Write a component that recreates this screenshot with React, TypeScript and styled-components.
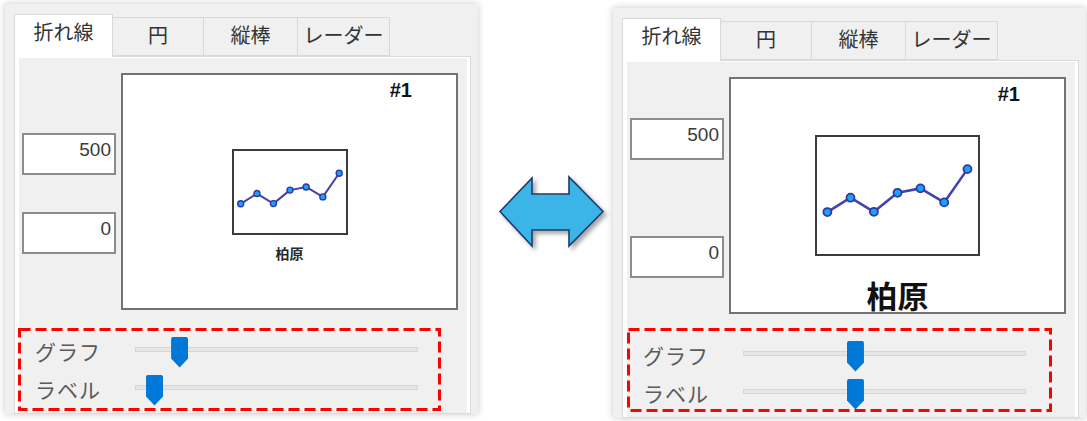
import React from 'react';
import styled, { createGlobalStyle } from 'styled-components';

const GlobalStyle = createGlobalStyle`
  html, body { margin: 0; padding: 0; background: #ffffff; }
  body { font-family: "Noto Sans CJK JP", "Noto Sans", sans-serif; }
`;

const Page = styled.div`
  display: flex;
  align-items: flex-start;
  width: 1087px;
  height: 421px;
  overflow: hidden;
`;

const Window = styled.div<{ $top: number; $left: number }>`
  margin-top: ${(p) => p.$top}px;
  margin-left: ${(p) => p.$left}px;
  width: 473px;
  height: 410px;
  flex: none;
  box-sizing: border-box;
  padding: 10px 0 0 9px;
  background: #f0f0f0;
  box-shadow: 0 0 7px rgba(0, 0, 0, 0.22);
  overflow: hidden;
  display: flex;
  flex-direction: column;
`;

const TabStrip = styled.div`
  display: flex;
  align-items: flex-start;
  height: 43px;
  margin-bottom: -1px;
  position: relative;
  z-index: 1;
`;

const Tab = styled.div<{ $w: number; $active?: boolean }>`
  width: ${(p) => p.$w}px;
  height: ${(p) => (p.$active ? 43 : 39)}px;
  margin-top: ${(p) => (p.$active ? 0 : 3)}px;
  margin-left: -1px;
  &:first-child { margin-left: 0; }
  box-sizing: border-box;
  border: 1px solid #d9d9d9;
  border-bottom: ${(p) => (p.$active ? 'none' : '1px solid #d9d9d9')};
  background: ${(p) => (p.$active ? '#ffffff' : '#f0f0f0')};
  display: flex;
  justify-content: center;
  align-items: flex-start;
  padding-top: 5px;
  font-size: 20px;
  line-height: 24px;
  color: #333333;
  position: relative;
  z-index: ${(p) => (p.$active ? 2 : 1)};
`;

const TabPanel = styled.div`
  width: 457px;
  flex: 1;
  box-sizing: border-box;
  border: 1px solid #dadada;
  background: #ffffff;
  padding: 1px 3px 0 4px;
  display: flex;
`;

const Content = styled.div`
  flex: 1;
  background: #f0f0f0;
  padding-top: 15px;
  display: flex;
  flex-direction: column;
`;

const TopArea = styled.div`
  display: flex;
  align-items: flex-start;
`;

const InputColumn = styled.div<{ $first: number; $gap: number }>`
  width: 102px;
  box-sizing: border-box;
  padding: ${(p) => p.$first}px 0 0 3px;
  display: flex;
  flex-direction: column;
  gap: ${(p) => p.$gap}px;
`;

const TextBox = styled.div`
  width: 94px;
  height: 42px;
  box-sizing: border-box;
  border: 2px solid #8c8c8c;
  background: #ffffff;
  padding: 4px 3px 0 0;
  text-align: right;
  font-family: "Liberation Sans", Arial, sans-serif;
  font-size: 19px;
  line-height: 22px;
  color: #3a3a3a;
`;

const ChartFrame = styled.div`
  width: 337px;
  height: 237px;
  box-sizing: border-box;
  border: 2px solid #727272;
  background: #ffffff;
  padding-top: 3px;
  display: flex;
  flex-direction: column;
  align-items: center;
`;

const Badge = styled.div`
  align-self: flex-end;
  margin-right: 44px;
  font-family: "Liberation Sans", Arial, sans-serif;
  font-weight: 700;
  font-size: 20px;
  line-height: 24px;
  color: #111111;
`;

const MiniChartBox = styled.div<{ $w: number; $h: number; $top: number }>`
  width: ${(p) => p.$w}px;
  height: ${(p) => p.$h}px;
  margin-top: ${(p) => p.$top}px;
  box-sizing: border-box;
  border: 2px solid #3c3c3c;
  background: #ffffff;
  svg { display: block; }
`;

const Caption = styled.div<{ $size: number; $top: number }>`
  margin-top: ${(p) => p.$top}px;
  font-size: ${(p) => p.$size}px;
  line-height: 1.2;
  font-weight: 700;
  color: ${(p) => (p.$size > 20 ? '#111111' : '#2a2a2a')};
`;

const SliderGroup = styled.div`
  position: relative;
  margin-top: 20px;
  padding-left: 16px;
  display: flex;
  flex-direction: column;
`;

const SliderRow = styled.div`
  display: grid;
  grid-template-columns: 100px 283px;
  align-items: center;
  height: 38px;
`;

const SliderLabel = styled.div`
  font-size: 21px;
  letter-spacing: 1px;
  line-height: 24px;
  padding-top: 3px;
  color: #5b5b5b;
`;

const Track = styled.div`
  position: relative;
  height: 5px;
  box-sizing: border-box;
  border: 1px solid #d6d6d6;
  background: #e6e6e6;
`;

const Thumb = styled.div`
  position: absolute;
  top: -11px;
  width: 17px;
  height: 31px;
  background: #0078d7;
  border-radius: 2px 2px 0 0;
  clip-path: polygon(0 0, 100% 0, 100% 71%, 50% 100%, 0 71%);
`;

const DashedOverlay = styled.svg<{ $x: number; $y: number }>`
  position: absolute;
  left: ${(p) => p.$x}px;
  top: ${(p) => p.$y}px;
  pointer-events: none;
  overflow: visible;
`;

const ArrowSlot = styled.div`
  width: 135px;
  flex: none;
  margin-top: 175px;
  padding-left: 20px;
  box-sizing: border-box;
  svg { display: block; }
`;

const NX = [0.075, 0.215, 0.357, 0.5, 0.639, 0.783, 0.924];
const NY = [0.637, 0.518, 0.635, 0.478, 0.441, 0.557, 0.282];

function MiniChart({ w, h, top, r, sw }: { w: number; h: number; top: number; r: number; sw: number }) {
  const iw = w - 4;
  const ih = h - 4;
  const pts = NX.map((x, i) => [x * w - 2, NY[i] * h - 2]);
  return (
    <MiniChartBox $w={w} $h={h} $top={top}>
      <svg width={iw} height={ih} viewBox={`0 0 ${iw} ${ih}`}>
        <polyline
          points={pts.map((p) => p.join(',')).join(' ')}
          fill="none"
          stroke="#4343ad"
          strokeWidth={sw}
          strokeLinejoin="round"
        />
        {pts.map((p, i) => (
          <circle key={i} cx={p[0]} cy={p[1]} r={r} fill="#18a4f2" stroke="#3436a6" strokeWidth={sw * 0.7} />
        ))}
      </svg>
    </MiniChartBox>
  );
}

function Slider({ label, value }: { label: string; value: number }) {
  return (
    <SliderRow>
      <SliderLabel>{label}</SliderLabel>
      <Track>
        <Thumb style={{ left: `calc(${value} * (100% - 17px))` }} />
      </Track>
    </SliderRow>
  );
}

type PanelProps = {
  top: number;
  left: number;
  boxFirst: number;
  boxGap: number;
  chart: { w: number; h: number; top: number; r: number; sw: number };
  caption: { size: number; top: number };
  graph: number;
  labelV: number;
  dash: { x: number; y: number; w: number; h: number };
};

function ChartWindow(p: PanelProps) {
  return (
    <Window $top={p.top} $left={p.left}>
      <TabStrip>
        <Tab $w={99} $active>折れ線</Tab>
        <Tab $w={92}>円</Tab>
        <Tab $w={95}>縦棒</Tab>
        <Tab $w={93}>レーダー</Tab>
      </TabStrip>
      <TabPanel>
        <Content>
          <TopArea>
            <InputColumn $first={p.boxFirst - 15} $gap={p.boxGap}>
              <TextBox>500</TextBox>
              <TextBox>0</TextBox>
            </InputColumn>
            <ChartFrame>
              <Badge>#1</Badge>
              <MiniChart {...p.chart} />
              <Caption $size={p.caption.size} $top={p.caption.top}>柏原</Caption>
            </ChartFrame>
          </TopArea>
          <SliderGroup>
            <Slider label="グラフ" value={p.graph} />
            <Slider label="ラベル" value={p.labelV} />
            <DashedOverlay $x={p.dash.x} $y={p.dash.y} width={p.dash.w} height={p.dash.h}>
              <rect
                x={1.5}
                y={1.5}
                width={p.dash.w - 3}
                height={p.dash.h - 3}
                fill="none"
                stroke="#ff0000"
                strokeWidth={3}
                strokeDasharray="11 5"
              />
            </DashedOverlay>
          </SliderGroup>
        </Content>
      </TabPanel>
    </Window>
  );
}

function DoubleArrow() {
  return (
    <svg width={114} height={82} viewBox="0 0 114 82">
      <defs>
        <filter id="arrowShadow" x="-10%" y="-10%" width="130%" height="140%">
          <feDropShadow dx="3" dy="3" stdDeviation="2" floodColor="#000" floodOpacity="0.35" />
        </filter>
      </defs>
      <polygon
        points="2,36.5 34,3 34,19 71,19 71,2 105,36.5 71,71 71,55 34,55 34,71"
        fill="#3ab4e8"
        stroke="#1f3a6e"
        strokeWidth={1.6}
        strokeLinejoin="miter"
        filter="url(#arrowShadow)"
      />
    </svg>
  );
}

export default function App() {
  return (
    <>
      <GlobalStyle />
      <Page>
        <ChartWindow
          top={4}
          left={5}
          boxFirst={75}
          boxGap={37}
          chart={{ w: 116, h: 86, top: 47, r: 3, sw: 2 }}
          caption={{ size: 14, top: 10 }}
          graph={0.133}
          labelV={0.038}
          dash={{ x: -1, y: -2, w: 423, h: 83 }}
        />
        <ArrowSlot>
          <DoubleArrow />
        </ArrowSlot>
        <ChartWindow
          top={8}
          left={0}
          boxFirst={56}
          boxGap={76}
          chart={{ w: 165, h: 121, top: 29, r: 4, sw: 2.6 }}
          caption={{ size: 31, top: 20 }}
          graph={0.39}
          labelV={0.39}
          dash={{ x: 0, y: -6, w: 425, h: 84 }}
        />
      </Page>
    </>
  );
}
